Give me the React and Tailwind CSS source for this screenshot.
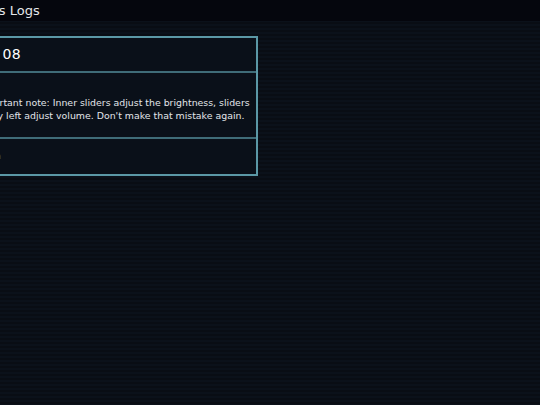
const ENTRY = {
  title: "Log 08",
  body: "Important note: Inner sliders adjust the brightness, sliders to my left adjust volume. Don't make that mistake again.",
  footer: "Open",
};

export default function App() {
  return (
    <div
      className="min-h-screen w-full overflow-hidden bg-[#0a0f17] bg-[repeating-linear-gradient(to_bottom,#0b111a_0px,#0b111a_2px,#090d14_2px,#090d14_4px)] text-[#e6e8ec]"
      style={{ fontFamily: '"DejaVu Sans", "Verdana", sans-serif' }}
    >
      {/* Top bar */}
      <div className="h-[21px] bg-[#05060d] flex items-center">
        <span className="-ml-[55px] text-[13px] leading-none text-[#e4e6ea] whitespace-nowrap">
          Captain's Logs
        </span>
      </div>

      {/* Entry card */}
      <div className="pt-[15px]">
        <div className="-ml-[38px] w-[296px] border-2 border-[#5b98a6] bg-[#0a1019]">
          <div className="px-[12px] h-[35px] flex items-center border-b-2 border-[#3f6c78]">
            <h2 className="-ml-[5px] whitespace-nowrap text-[14px] font-normal tracking-[0.5px] text-white">
              {ENTRY.title}
            </h2>
          </div>
          <div className="pl-[12px] pr-[6px] pt-[23px] pb-[15px] border-b-2 border-[#3f6c78]">
            <p className="text-[9.4px] leading-[13px] text-[#e2e5ea]">{ENTRY.body}</p>
          </div>
          <div className="px-[12px] h-[35px] flex items-center">
            <span className="text-[9.4px] text-[#5b98a6]">{ENTRY.footer}</span>
          </div>
        </div>
      </div>
    </div>
  );
}
